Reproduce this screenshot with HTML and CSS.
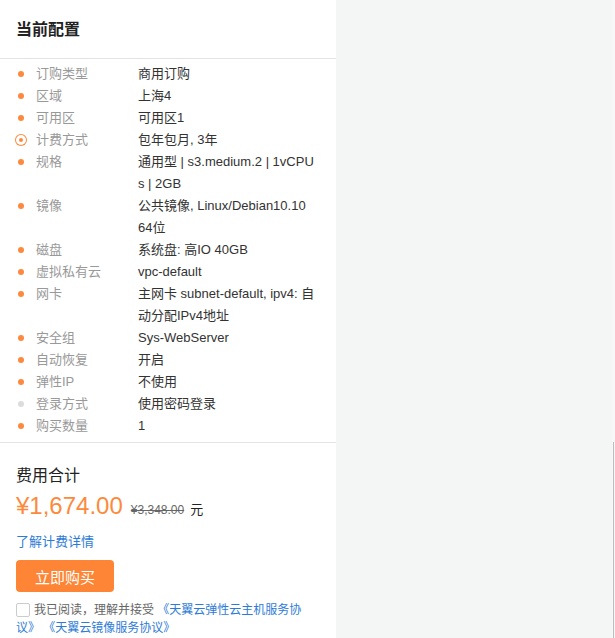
FILE: index.html
```html
<!DOCTYPE html>
<html lang="zh-CN">
<head>
<meta charset="utf-8">
<title>当前配置</title>
<link rel="stylesheet" href="styles.css">
</head>
<body>
<div class="page">
  <aside class="panel">
    <h2 class="title">当前配置</h2>
    <ul class="specs">
      <li class="row"><span class="dot"></span><span class="label">订购类型</span><span class="value">商用订购</span></li>
      <li class="row"><span class="dot"></span><span class="label">区域</span><span class="value">上海4</span></li>
      <li class="row"><span class="dot"></span><span class="label">可用区</span><span class="value">可用区1</span></li>
      <li class="row"><span class="dot radio"></span><span class="label">计费方式</span><span class="value">包年包月, 3年</span></li>
      <li class="row"><span class="dot"></span><span class="label">规格</span><span class="value">通用型 | s3.medium.2 | 1vCPUs | 2GB</span></li>
      <li class="row"><span class="dot"></span><span class="label">镜像</span><span class="value">公共镜像, Linux/Debian10.10 64位</span></li>
      <li class="row"><span class="dot"></span><span class="label">磁盘</span><span class="value">系统盘: 高IO 40GB</span></li>
      <li class="row"><span class="dot"></span><span class="label">虚拟私有云</span><span class="value">vpc-default</span></li>
      <li class="row"><span class="dot"></span><span class="label">网卡</span><span class="value">主网卡 subnet-default, ipv4: 自动分配IPv4地址</span></li>
      <li class="row"><span class="dot"></span><span class="label">安全组</span><span class="value">Sys-WebServer</span></li>
      <li class="row"><span class="dot"></span><span class="label">自动恢复</span><span class="value">开启</span></li>
      <li class="row"><span class="dot"></span><span class="label">弹性IP</span><span class="value">不使用</span></li>
      <li class="row"><span class="dot muted"></span><span class="label">登录方式</span><span class="value">使用密码登录</span></li>
      <li class="row"><span class="dot"></span><span class="label">购买数量</span><span class="value">1</span></li>
    </ul>
    <section class="cost">
      <div class="cost-title">费用合计</div>
      <div class="price-line"><span class="price">¥1,674.00</span><span class="old">¥3,348.00</span><span class="unit">元</span></div>
      <a class="detail" href="#">了解计费详情</a>
      <button class="buy" type="button">立即购买</button>
      <p class="agree"><span class="check"></span>我已阅读，理解并接受 <a href="#">《天翼云弹性云主机服务协议》</a> <a href="#">《天翼云镜像服务协议》</a></p>
    </section>
  </aside>
  <div class="canvas"></div>
  <div class="edge"><div class="bar"></div></div>
</div>
</body>
</html>
```

FILE: styles.css
```css
html, body {
  margin: 0;
  padding: 0;
  height: 100%;
}
body {
  font-family: "Liberation Sans", "Noto Sans CJK SC", sans-serif;
  font-size: 13px;
  color: #333;
  background: #f4f5f5;
}
.page {
  display: flex;
  height: 638px;
  overflow: hidden;
}
.panel {
  width: 336px;
  flex: none;
  background: #fff;
}
.canvas {
  flex: 1;
  background: #f4f5f5;
}
.edge {
  width: 3px;
  background: #f8f8f8;
  display: flex;
  flex-direction: column;
}
.bar {
  margin-top: 442px;
  margin-left: 1px;
  width: 1px;
  flex: 1;
  background: #bdbdbd;
}
.title {
  margin: 0;
  padding: 19px 16px 0;
  height: 39px;
  font-size: 16px;
  font-weight: bold;
  line-height: 22px;
  color: #222;
  border-bottom: 1px solid #e3e3e3;
  box-sizing: content-box;
}
.specs {
  list-style: none;
  margin: 0;
  padding: 4px 0 5px;
  border-bottom: 1px solid #e3e3e3;
}
.row {
  display: flex;
  align-items: flex-start;
  line-height: 22px;
}
.dot {
  width: 6px;
  height: 6px;
  border-radius: 50%;
  background: #fd8a3c;
  margin: 8px 12px 0 18px;
  flex: none;
}
.dot.radio {
  width: 4px;
  height: 4px;
  margin: 6px 10px 0 16px;
  border: 3px solid #fff;
  box-shadow: 0 0 0 1px #fd8a3c;
  background: #fd8a3c;
}
.dot.muted {
  background: #dcdcdc;
}
.label {
  width: 102px;
  flex: none;
  color: #999;
}
.value {
  width: 177px;
  color: #333;
  word-break: break-all;
}
.cost {
  padding: 22px 16px 0;
}
.cost-title {
  font-size: 16px;
  line-height: 22px;
  color: #222;
}
.price-line {
  margin-top: 5px;
  display: flex;
  align-items: baseline;
  height: 30px;
}
.price {
  font-size: 24px;
  color: #fd8a3c;
}
.old {
  margin-left: 8px;
  font-size: 12px;
  color: #666;
  text-decoration: line-through;
}
.unit {
  margin-left: 6px;
  font-size: 13px;
  color: #222;
}
.detail {
  display: block;
  margin-top: 11px;
  line-height: 18px;
  color: #2e7bd6;
  text-decoration: none;
}
.buy {
  display: block;
  margin-top: 9px;
  width: 98px;
  height: 32px;
  border: none;
  border-radius: 4px;
  background: #fd8535;
  color: #fff;
  font-family: inherit;
  font-size: 15px;
  padding: 0;
}
.agree {
  margin: 9px 0 0;
  padding-right: 8px;
  font-size: 12px;
  line-height: 18px;
  color: #666;
}
.agree a {
  color: #2e7bd6;
  text-decoration: none;
}
.check {
  display: inline-block;
  width: 12px;
  height: 12px;
  border: 1px solid #ccc;
  border-radius: 2px;
  vertical-align: -3px;
  margin-right: 4px;
  background: #fff;
}
```
